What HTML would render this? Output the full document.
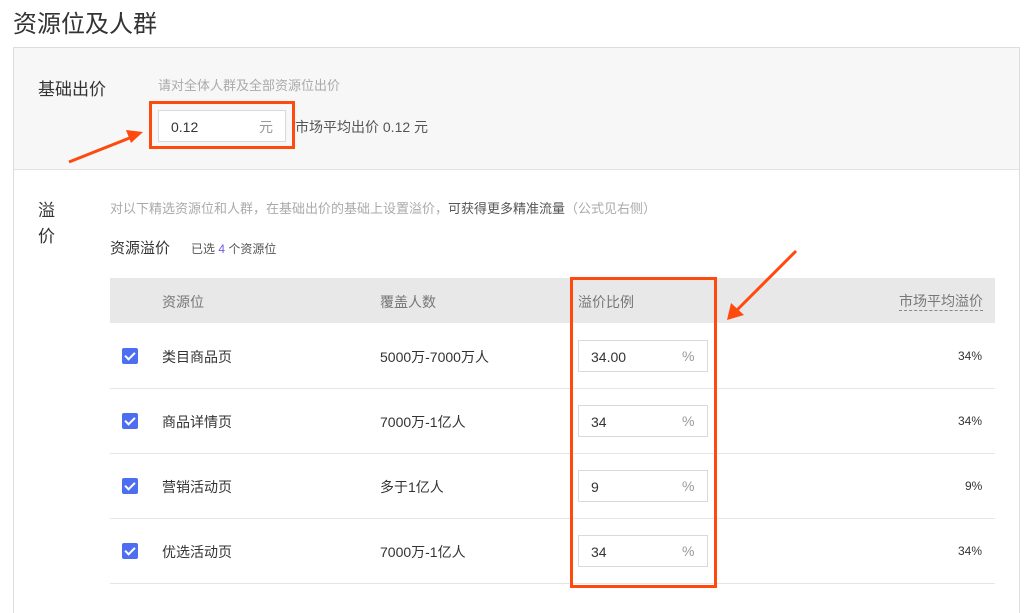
<!DOCTYPE html>
<html><head><meta charset="utf-8"><style>
*{margin:0;padding:0;box-sizing:border-box}
html,body{width:1026px;height:613px;overflow:hidden}
body{background:#fff;position:relative;font-family:"Liberation Sans","Noto Sans CJK SC",sans-serif;color:#333}
.a{position:absolute;white-space:nowrap}
.inp{position:absolute;border:1px solid #d9d9d9;background:#fff}
.cb{position:absolute;width:16px;height:16px;background:#4e6ef2;border-radius:2px}
.cb:after{content:"";position:absolute;left:5px;top:2px;width:4px;height:8px;border:solid #fff;border-width:0 2px 2px 0;transform:rotate(45deg)}
.line{position:absolute;left:110px;width:885px;height:1px;background:#e6e6e6}
.n{font-size:14px;margin-top:2px}
.c{font-size:14px}
</style></head><body>
<div class="a" style="left:13px;top:4px;font-size:24px;color:#333">资源位及人群</div>
<div style="position:absolute;left:13px;top:47px;width:1007px;height:566px;border:1px solid #ddd;border-bottom:none"></div>
<div style="position:absolute;left:14px;top:48px;width:1005px;height:122px;background:#f7f7f7;border-bottom:1px solid #e3e3e3"></div>
<div class="a" style="left:38px;top:75px;font-size:17px">基础出价</div>
<div class="a" style="left:158px;top:75px;font-size:13px;color:#aaa">请对全体人群及全部资源位出价</div>
<div class="inp" style="left:158px;top:110px;width:128px;height:32px"></div>
<div class="a" style="left:171px;top:119px;font-size:14px">0.12</div>
<div class="a" style="left:259px;top:117px;font-size:14px;color:#999">元</div>
<div style="position:absolute;left:149px;top:101px;width:146px;height:48px;border:3px solid #ff4a0e"></div>
<div class="a" style="left:295px;top:117px;font-size:14px;color:#555">市场平均出价 0.12 元</div>
<div class="a" style="left:38px;top:198px;font-size:17px;line-height:26px;white-space:normal;width:20px">溢<br>价</div>
<div class="a" style="left:110px;top:198px;font-size:13px;color:#aaa">对以下精选资源位和人群，在基础出价的基础上设置溢价，<span style="color:#555">可获得更多精准流量</span>（公式见右侧）</div>
<div class="a" style="left:110px;top:237px;font-size:15px">资源溢价</div>
<div class="a" style="left:191px;top:240px;font-size:12px;color:#555">已选 <span style="color:#6b5ce7">4</span> 个资源位</div>
<div style="position:absolute;left:110px;top:278px;width:885px;height:45px;background:#e8e8e8"></div>
<div class="a" style="left:162px;top:292px;font-size:14px;color:#777">资源位</div>
<div class="a" style="left:380px;top:292px;font-size:14px;color:#777">覆盖人数</div>
<div class="a" style="left:578px;top:292px;font-size:14px;color:#777">溢价比例</div>
<div class="a" style="left:899px;top:292px;font-size:14px;color:#777;border-bottom:1px dashed #888;line-height:18px">市场平均溢价</div>

<div class="cb" style="left:122px;top:348px"></div>
<div class="a" style="left:162px;top:347px;font-size:14px">类目商品页</div>
<div class="a c" style="left:380px;top:347px">5000万-7000万人</div>
<div class="inp" style="left:578px;top:340px;width:130px;height:32px"></div>
<div class="a n" style="left:591px;top:347px">34.00</div>
<div class="a" style="left:682px;top:348px;font-size:14px;color:#999">%</div>
<div class="a" style="left:958px;top:349px;font-size:12px">34%</div>
<div class="line" style="top:388px"></div>

<div class="cb" style="left:122px;top:413px"></div>
<div class="a" style="left:162px;top:412px;font-size:14px">商品详情页</div>
<div class="a c" style="left:380px;top:412px">7000万-1亿人</div>
<div class="inp" style="left:578px;top:405px;width:130px;height:32px"></div>
<div class="a n" style="left:591px;top:412px">34</div>
<div class="a" style="left:682px;top:413px;font-size:14px;color:#999">%</div>
<div class="a" style="left:958px;top:414px;font-size:12px">34%</div>
<div class="line" style="top:453px"></div>

<div class="cb" style="left:122px;top:478px"></div>
<div class="a" style="left:162px;top:477px;font-size:14px">营销活动页</div>
<div class="a c" style="left:380px;top:477px">多于1亿人</div>
<div class="inp" style="left:578px;top:470px;width:130px;height:32px"></div>
<div class="a n" style="left:591px;top:477px">9</div>
<div class="a" style="left:682px;top:478px;font-size:14px;color:#999">%</div>
<div class="a" style="left:965px;top:479px;font-size:12px">9%</div>
<div class="line" style="top:518px"></div>

<div class="cb" style="left:122px;top:543px"></div>
<div class="a" style="left:162px;top:542px;font-size:14px">优选活动页</div>
<div class="a c" style="left:380px;top:542px">7000万-1亿人</div>
<div class="inp" style="left:578px;top:535px;width:130px;height:32px"></div>
<div class="a n" style="left:591px;top:542px">34</div>
<div class="a" style="left:682px;top:543px;font-size:14px;color:#999">%</div>
<div class="a" style="left:958px;top:544px;font-size:12px">34%</div>
<div class="line" style="top:583px"></div>

<div style="position:absolute;left:570px;top:277px;width:147px;height:311px;border:3px solid #ff4a0e"></div>
<svg style="position:absolute;left:0;top:0" width="1026" height="613">
<line x1="69" y1="162" x2="132" y2="137" stroke="#ff4a0e" stroke-width="3"/>
<polygon points="143,132 126,130 131,143" fill="#ff4a0e"/>
<line x1="796" y1="251" x2="735" y2="312" stroke="#ff4a0e" stroke-width="3"/>
<polygon points="727,320 731,303 744,315" fill="#ff4a0e"/>
</svg>
</body></html>
